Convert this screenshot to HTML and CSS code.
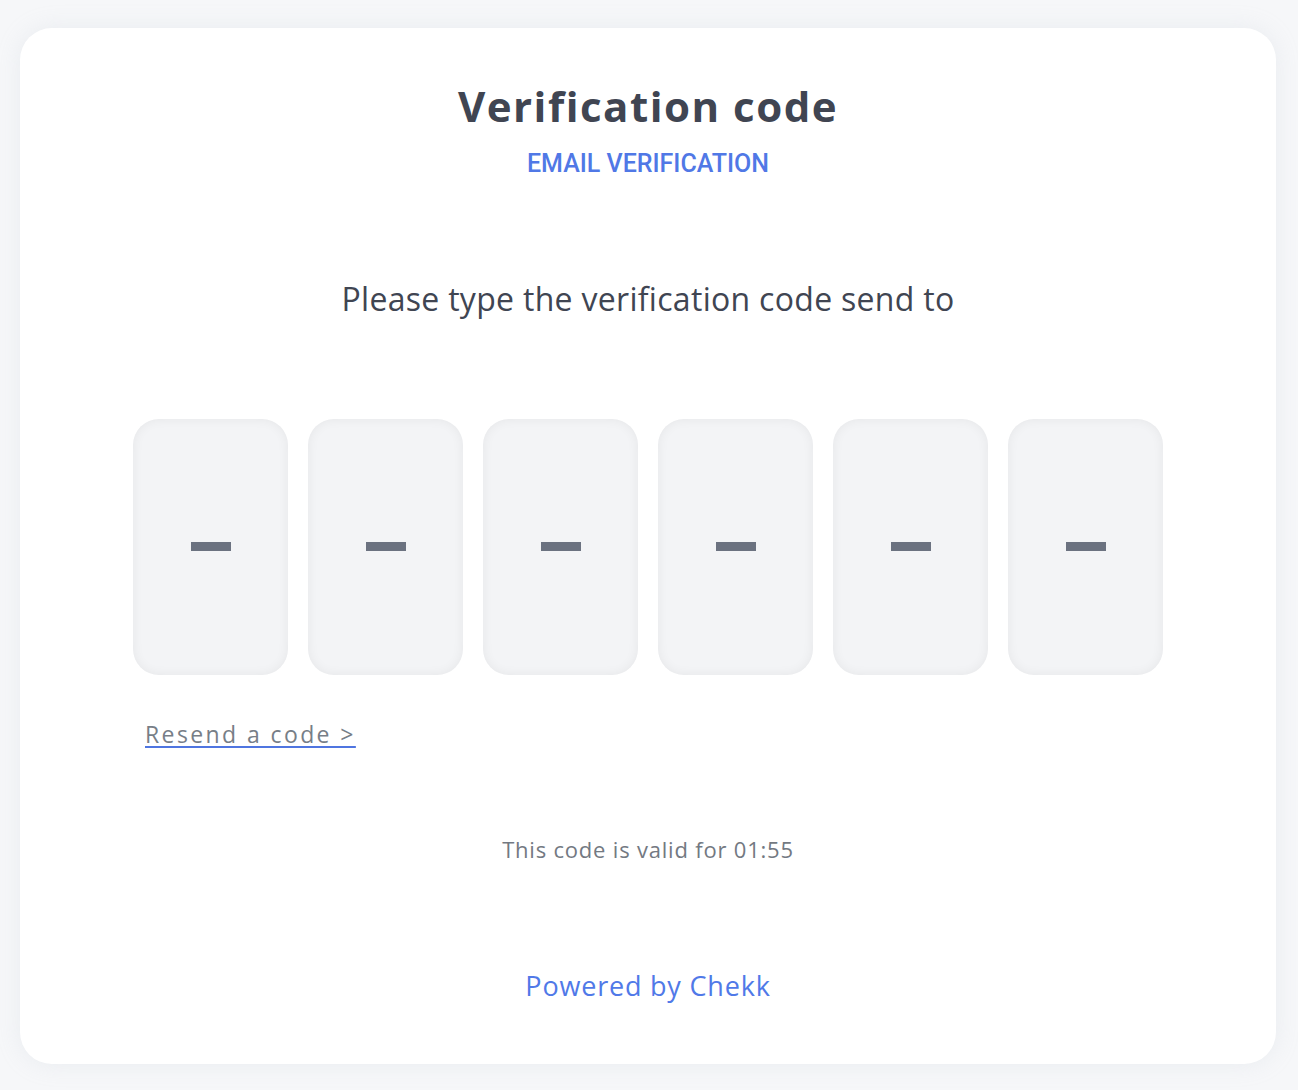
FILE: index.html
```html
<!DOCTYPE html>
<html>
<head>
<meta charset="utf-8">
<link rel="stylesheet" href="styles.css">
</head>
<body>
<div class="page">
  <div class="card">
    <h1 class="title">Verification code</h1>
    <div class="subtitle">EMAIL VERIFICATION</div>
    <p class="prompt">Please type the verification code send to</p>
    <div class="codes">
      <div class="box"><span class="dash"></span></div>
      <div class="box"><span class="dash"></span></div>
      <div class="box"><span class="dash"></span></div>
      <div class="box"><span class="dash"></span></div>
      <div class="box"><span class="dash"></span></div>
      <div class="box"><span class="dash"></span></div>
    </div>
    <div class="resend-row"><a class="resend" href="#">Resend a code &gt;</a></div>
    <p class="valid">This code is valid for 01:55</p>
    <p class="powered">Powered by Chekk</p>
  </div>
</div>
</body>
</html>
```
FILE: styles.css
```css
html, body {
  margin: 0;
  padding: 0;
  background: #f6f7f9;
}
body {
  font-family: "Open Sans", "DejaVu Sans", sans-serif;
}
.page {
  padding: 28px 22px 26px 20px;
}
.card {
  background: #ffffff;
  border-radius: 32px;
  box-shadow: 0 0 24px rgba(180, 186, 200, 0.18);
  height: 1036px;
  box-sizing: border-box;
  display: flex;
  flex-direction: column;
  align-items: center;
  padding-top: 50px;
}
.title {
  margin: 0;
  font-size: 42px;
  font-weight: 700;
  color: #404552;
  line-height: 56px;
  letter-spacing: 1.5px;
}
.subtitle {
  margin-top: 15px;
  font-family: Roboto, "Liberation Sans", sans-serif;
  font-weight: 500;
  font-size: 25px;
  color: #5078e6;
  line-height: 30px;
}
.prompt {
  margin: 100px 0 0;
  font-size: 32px;
  letter-spacing: 0.3px;
  color: #404552;
  line-height: 40px;
}
.codes {
  margin-top: 100px;
  display: flex;
  gap: 20px;
}
.box {
  width: 155px;
  height: 256px;
  border-radius: 26px;
  background: #f3f4f6;
  box-shadow: inset 0 0 12px rgba(0, 0, 0, 0.06);
  display: flex;
  align-items: center;
  justify-content: center;
}
.dash {
  display: block;
  width: 40px;
  height: 9px;
  background: #6b7280;
  margin-top: -2px;
}
.resend-row {
  align-self: stretch;
  padding-left: 125px;
  margin-top: 43px;
}
.resend {
  font-size: 23px;
  letter-spacing: 2.4px;
  color: #777e87;
  text-decoration: underline;
  text-decoration-color: #4f75e0;
  text-decoration-thickness: 2px;
  text-underline-offset: 3px;
  line-height: 32px;
}
.valid {
  margin: 84px 0 0;
  font-size: 22px;
  letter-spacing: 0.8px;
  color: #737982;
  line-height: 30px;
}
.powered {
  margin: 104px 0 0;
  font-size: 27px;
  letter-spacing: 0.8px;
  color: #5079e8;
  line-height: 36px;
}
```
